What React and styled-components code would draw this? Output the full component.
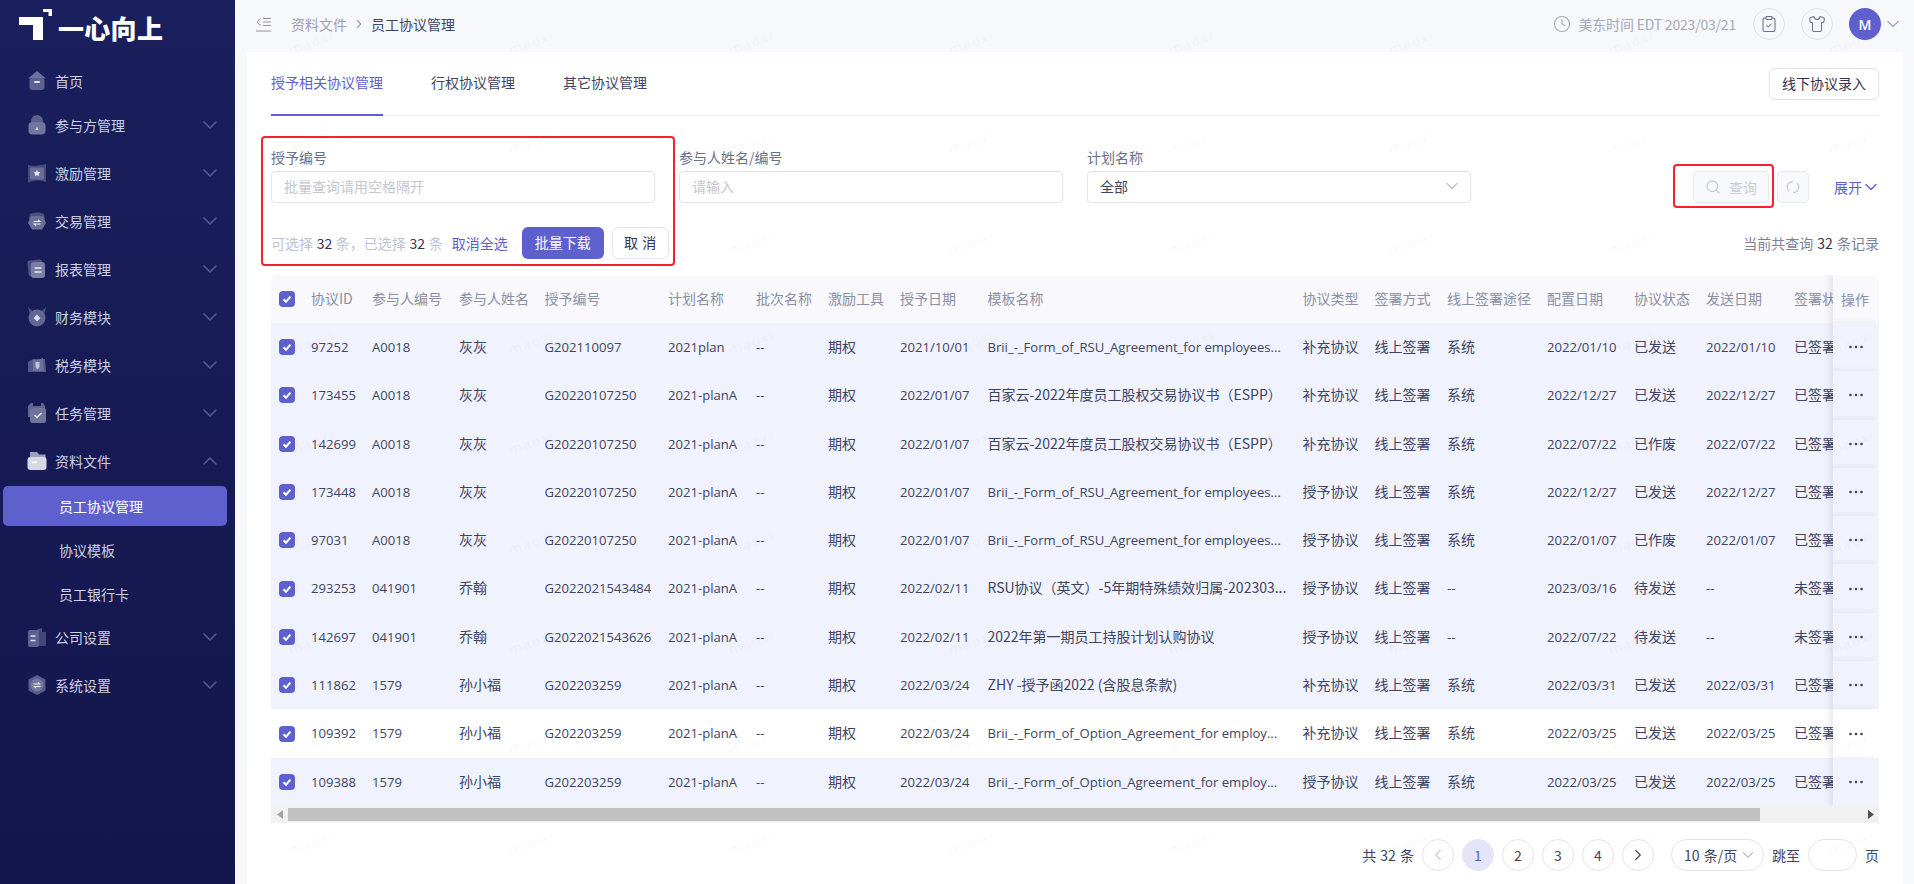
import React from 'react';
import styled, { createGlobalStyle } from 'styled-components';
import {
  ChevronDown,
  ChevronLeft,
  ChevronRight,
  ChevronUp,
  ClipboardCheck,
  Clock,
  Search,
  Shirt
} from 'lucide-react';

const PRIMARY = '#5e60ce';
const COLUMNS =
  '40px 61px 87px 85.5px 123.5px 88px 72px 72px 87.5px 315px 72px 72.5px 100px 87px 72px 88px 39px 46px';

const GlobalStyle = createGlobalStyle`
  * { box-sizing: border-box; }
  html, body { margin: 0; height: 100%; }
  body {
    background: #f7f8fc;
    font-family: "Noto Sans CJK SC", "Liberation Sans", sans-serif;
    font-size: 14px;
    color: #3e4463;
  }
`;

const Page = styled.div`
  position: relative;
  display: flex;
  height: 884px;
  overflow: hidden;
`;

const Sidebar = styled.aside`
  flex: 0 0 235px;
  background: linear-gradient(180deg, #1a205d 0%, #14154c 100%);
`;

const Brand = styled.div`
  display: flex;
  align-items: center;
  gap: 6px;
  height: 48px;
  padding-left: 19px;
  color: #fff;
  font-size: 26px;
  line-height: 30px;
  font-weight: 900;
  letter-spacing: 0.3px;

  span {
    margin-top: 7px;
  }
`;

const MenuList = styled.nav`
  display: flex;
  flex-direction: column;
  padding-top: 14px;
`;

const MenuItem = styled.div`
  display: flex;
  align-items: center;
  gap: 8px;
  height: ${p => (p.$first ? '40px' : '48px')};
  padding: 0 13px 2px 27px;
  color: #ccd0e4;
  line-height: 20px;

  .chevron {
    margin-left: auto;
    color: #585c8e;
  }
`;

const SubList = styled.div`
  display: flex;
  flex-direction: column;
  gap: 4px;
`;

const SubItem = styled.div`
  height: 40px;
  margin: ${p => (p.$active ? '0 8px 0 3px' : '0')};
  padding-left: ${p => (p.$active ? '56px' : '59px')};
  background: ${p => (p.$active ? PRIMARY : 'transparent')};
  border-radius: 5px;
  color: ${p => (p.$active ? '#fff' : '#ccd0e4')};
  line-height: 40px;
`;

const Main = styled.div`
  flex: 1;
  min-width: 0;
  display: flex;
  flex-direction: column;
`;

const Topbar = styled.header`
  display: flex;
  align-items: center;
  height: 52px;
  padding: 0 15px 4px 21px;
`;

const Crumbs = styled.div`
  display: flex;
  align-items: center;
  margin-left: 20px;
  color: #9ba0b4;

  b {
    font-weight: 400;
    color: #3e4463;
  }
  svg {
    margin: 0 5px;
  }
`;

const TopRight = styled.div`
  display: flex;
  align-items: center;
  margin-left: auto;
  color: #a4a9bb;

  > svg {
    margin-right: -4px;
  }
`;

const ClockText = styled.span`
  display: flex;
  align-items: center;
  gap: 8px;
  margin-right: 17px;
  letter-spacing: -0.2px;
`;

const RoundIcon = styled.span`
  display: flex;
  align-items: center;
  justify-content: center;
  width: 32px;
  height: 32px;
  margin-right: 16px;
  border: 1px solid #e1e3ec;
  border-radius: 50%;
  color: #6c7186;
`;

const Avatar = styled.span`
  display: flex;
  align-items: center;
  justify-content: center;
  width: 32px;
  height: 32px;
  margin-right: 2px;
  border-radius: 50%;
  background: ${PRIMARY};
  color: #fff;
  font-family: "Open Sans", sans-serif;
  font-weight: 600;
`;

const Card = styled.main`
  flex: 1;
  margin: 0 11px 0 12px;
  padding: 0 24px;
  background: #fff;
`;

const TabBar = styled.div`
  display: flex;
  align-items: center;
  height: 64px;
  border-bottom: 1px solid #eceef5;
`;

const Tab = styled.div`
  height: 64px;
  margin-right: 48px;
  border-bottom: 2px solid ${p => (p.$active ? PRIMARY : 'transparent')};
  color: ${p => (p.$active ? PRIMARY : '#3e4463')};
  line-height: 60px;
`;

const OutlineButton = styled.button`
  height: 32px;
  padding: 0 12px 2px;
  background: #fff;
  border: 1px solid #e3e5ee;
  border-radius: 6px;
  color: #2f344f;
  font: inherit;
  line-height: 20px;
`;

const EntryButton = styled(OutlineButton)`
  margin-left: auto;
`;

const FilterArea = styled.section`
  position: relative;
`;

const FilterRow = styled.div`
  display: flex;
  align-items: flex-end;
  gap: 24px;
  padding-top: 31px;
`;

const Field = styled.label`
  display: flex;
  flex-direction: column;
  gap: 4px;
  width: 384px;
  color: #6b7088;
  line-height: 20px;
`;

const InputBox = styled.div`
  display: flex;
  align-items: center;
  justify-content: space-between;
  height: 32px;
  padding: 0 12px 2px;
  border: 1px solid #e3e5ee;
  border-radius: 4px;
  color: ${p => (p.$filled ? '#3e4463' : '#c4c7d0')};

  svg {
    margin-right: -4px;
    color: #b9bdcb;
  }
`;

const QueryTools = styled.div`
  display: flex;
  align-items: center;
  gap: 8px;
  margin-left: auto;
`;

const GhostButton = styled.span`
  display: flex;
  align-items: center;
  justify-content: center;
  gap: 8px;
  width: ${p => p.$width}px;
  height: 32px;
  background: #f8f9fc;
  border: 1px solid #e6e8f0;
  border-radius: 5px;
  color: #c8ccd9;
`;

const Expand = styled.span`
  display: flex;
  align-items: center;
  margin-left: 17px;
  color: ${PRIMARY};

  svg {
    margin: 0 -2px 0 -1px;
  }
`;

const ActionRow = styled.div`
  display: flex;
  align-items: center;
  justify-content: space-between;
  height: 32px;
  margin-top: 24px;
`;

const Batch = styled.div`
  display: flex;
  align-items: center;
  color: #bcc3d8;
  word-spacing: 0.5px;

  b {
    font-weight: 400;
    color: #2f344f;
  }
`;

const LinkText = styled.span`
  margin: 0 14px 0 9px;
  color: ${PRIMARY};
`;

const PrimaryButton = styled.button`
  width: 82px;
  height: 32px;
  margin-right: 8px;
  padding: 0 0 2px;
  background: ${PRIMARY};
  border: 0;
  border-radius: 6px;
  color: #fff;
  font: inherit;
`;

const CancelButton = styled(OutlineButton)`
  width: 57px;
  padding: 0 0 2px;
  word-spacing: 1px;
`;

const Summary = styled.div`
  color: #7d8298;
  word-spacing: 1px;

  b {
    font-weight: 400;
    color: #2f344f;
  }
`;

const Mark = styled.div`
  position: absolute;
  border: 2px solid #f5222d;
  border-radius: 4px;
  pointer-events: none;
`;

const BatchMark = styled(Mark)`
  left: -10px;
  top: 20px;
  width: 414px;
  height: 130px;
`;

const QueryMark = styled(Mark)`
  left: 1402px;
  top: 48px;
  width: 101px;
  height: 44px;
`;

const Table = styled.div`
  margin-top: 16px;
  overflow: hidden;
  border-radius: 6px 6px 0 0;
`;

const Row = styled.div`
  display: grid;
  grid-template-columns: ${COLUMNS};
  height: ${p => (p.$head ? '48px' : '48.3px')};
  background: ${p => (p.$head ? '#f8f8fd' : p.$plain ? '#fff' : '#f0f2fd')};
  color: ${p => (p.$head ? '#8b90a4' : '#3e4463')};
`;

const Cell = styled.div`
  overflow: hidden;
  white-space: nowrap;
  line-height: ${p => (p.$ascii ? '48px' : '46px')};
  font-family: ${p => (p.$ascii ? '"Open Sans", sans-serif' : 'inherit')};
  font-size: ${p => (p.$ascii ? '13.1px' : '14px')};
`;

const BoxCell = styled(Cell)`
  display: flex;
  align-items: center;
  padding-left: 8px;
`;

const FixedCell = styled(Cell)`
  position: relative;
  display: flex;
  align-items: center;
  padding-left: 8px;
  background: inherit;
  box-shadow: -4px 0 6px rgba(40, 40, 90, 0.09);
`;

const DotsCell = styled(FixedCell)`
  padding-left: 16px;
`;

const CheckBox = styled.span`
  display: flex;
  align-items: center;
  justify-content: center;
  width: 16px;
  height: 16px;
  background: ${PRIMARY};
  border-radius: 4px;
`;

const ScrollTrack = styled.div`
  display: flex;
  align-items: center;
  height: 17px;
  background: #f1f1f1;
`;

const ScrollArrow = styled.span`
  display: flex;
  align-items: center;
  justify-content: center;
  flex: 0 0 17px;
  height: 17px;
  color: ${p => (p.$off ? '#a3a3a3' : '#505050')};
`;

const ScrollThumb = styled.span`
  flex: 0 0 1472px;
  height: 13px;
  margin-right: auto;
  background: #c1c1c1;
`;

const Pager = styled.div`
  display: flex;
  align-items: center;
  justify-content: flex-end;
  gap: 8px;
  margin-top: 16px;
  color: #3e4463;
  word-spacing: 1px;
`;

const PageButton = styled.span`
  display: flex;
  align-items: center;
  justify-content: center;
  width: 32px;
  height: 32px;
  background: ${p => (p.$active ? '#e5e5f9' : '#fff')};
  border: 1px solid ${p => (p.$active ? '#e5e5f9' : '#e3e5ee')};
  border-radius: 50%;
  color: ${p => (p.$active ? PRIMARY : p.$off ? '#c5c8d6' : '#3e4463')};
`;

const SizeSelect = styled.span`
  display: flex;
  align-items: center;
  gap: 2px;
  width: 93px;
  height: 32px;
  margin-left: 9px;
  padding-left: 12px;
  border: 1px solid #e3e5ee;
  border-radius: 16px;

  svg {
    color: #b9bdcb;
  }
`;

const JumpInput = styled.span`
  width: 49px;
  height: 32px;
  border: 1px solid #e3e5ee;
  border-radius: 16px;
`;

const Watermarks = styled.div`
  position: absolute;
  left: -7px;
  top: -13px;
  display: grid;
  grid-template-columns: repeat(9, 220px);
  grid-auto-rows: 100px;
  pointer-events: none;
`;

const Watermark = styled.span`
  align-self: center;
  justify-self: center;
  transform: rotate(-20deg);
  color: rgba(80, 80, 120, 0.045);
  font-family: "Open Sans", sans-serif;
  letter-spacing: 1.4px;
`;

const DuoSvg = styled.svg`
  flex: none;
  filter: blur(0.4px);
`;

const Duo = ({ children }) => (
  <DuoSvg width="20" height="20" viewBox="0 0 20 20" fill="none">
    {children}
  </DuoSvg>
);

const HomeIcon = () => (
  <Duo>
    <path d="M10 0 19 7.5H1z" fill="#8a8db0" opacity=".75" />
    <rect x="2.5" y="7" width="15" height="12" rx="3" fill="#5d6090" />
    <rect x="7" y="10" width="6" height="2" rx="1" fill="#e4e5f0" />
  </Duo>
);
const PartyIcon = () => (
  <Duo>
    <circle cx="10" cy="6" r="6" fill="#5d6090" />
    <rect x="1.5" y="7" width="17" height="12.5" rx="4" fill="#73759e" />
    <path d="M10 11.5 11.5 15H8.5z" fill="#e4e5f0" />
  </Duo>
);
const RewardIcon = () => (
  <Duo>
    <path d="M1 2c6 1 11 1 18-1v18c-6-2-12-2-18 1z" fill="#474b80" />
    <rect x="3" y="4.5" width="14" height="12" rx="1.5" fill="#6c6e98" />
    <path d="m10 6.8 1 2.3 2.4.2-1.8 1.6.6 2.4L10 12l-2.200 1.300.6-2.400-1.800-1.600L9 9.100z" fill="#eceef5" />
  </Duo>
);
const TradeIcon = () => (
  <Duo>
    <path d="M3 3c4-2 10-2 14 0l1 5-8 3-8-3z" fill="#4b4f84" />
    <path d="M4 5h12l3 7-4 6.500H5L1 12z" fill="#6c6e98" />
    <path d="M6.500 10.500H13l-2-1.600M13.500 13H7l2 1.600" stroke="#eceef5" strokeWidth="1.1" />
  </Duo>
);
const ReportIcon = () => (
  <Duo>
    <rect x="1" y="1" width="15" height="16" rx="2.5" transform="rotate(-6 8 9)" fill="#4f5286" />
    <rect x="4" y="3" width="14" height="16" rx="3" fill="#7b7da3" />
    <path d="M7.500 9h7M7.500 13h7" stroke="#e9eaf3" strokeWidth="1.4" />
  </Duo>
);
const FinanceIcon = () => (
  <Duo>
    <path d="M1 0 8 6h4l7-6-2 9H3z" fill="#4b4f84" />
    <circle cx="10" cy="11" r="8.500" fill="#636592" />
    <path d="m10 7.500 3.500 3.500L10 14.500 6.500 11z" fill="#dcdde9" />
  </Duo>
);
const TaxIcon = () => (
  <Duo>
    <path d="M1 7 6 4h12l1 13H1z" fill="#54578a" />
    <path d="M6 4c3 2 6 1 10-1l1 13H6z" fill="#6e7099" />
    <path d="M8.500 7h4v5l-2 2.500-2-2.500z" fill="#bfc0d6" />
  </Duo>
);
const TaskIcon = () => (
  <Duo>
    <path d="M4 0h2v3h8V0h2l2 3v11H1V3z" fill="#63658f" />
    <rect x="3" y="5" width="16" height="15" rx="2.5" fill="#72749c" />
    <path d="m7.500 12 2.500 2.500 4.500-4.500" stroke="#e9eaf3" strokeWidth="1.5" />
  </Duo>
);
const FolderIcon = () => (
  <Duo>
    <path d="M3 1h7l2 2.500h6.500V12H3z" fill="#9ea0bf" />
    <rect x="0.5" y="6" width="19" height="13" rx="3" fill="#d7d8e6" />
    <rect x="4" y="10.5" width="6" height="1.6" fill="#fff" />
  </Duo>
);
const CompanyIcon = () => (
  <Duo>
    <path d="M10 2.500 15 1v18h-5z" fill="#4b4f84" />
    <rect x="10" y="5" width="9" height="14" fill="#42467a" />
    <rect x="1" y="3" width="11" height="17" rx="2" fill="#5d6090" />
    <path d="M3.500 9h5M3.500 13.500h5" stroke="#dfe0ec" strokeWidth="1.3" />
  </Duo>
);
const SystemIcon = () => (
  <Duo>
    <path d="M10 0 18.500 4.500v11L10 20l-8.500-4.500v-11z" fill="#585b8c" />
    <circle cx="10" cy="10" r="6.500" fill="#77799f" />
    <path d="M6.500 9h6l-1.500-1.500M13.500 11.500h-6L9 13" stroke="#eceef5" strokeWidth="1.2" />
  </Duo>
);

const Logo = () => (
  <svg width="33" height="32" viewBox="0 0 33 32" fill="#fff">
    <path d="M0 9h24v23H14V17H0z" />
    <path d="M24 1h9v7h-3.500V4H24z" />
  </svg>
);

const CollapseIcon = () => (
  <svg width="15" height="15" viewBox="0 0 15 15" fill="none" stroke="#8f94a8" strokeWidth="1">
    <path d="M4.500 1.500 1 5l3.500 3.500M7 1.500h8M7 5h8M7 8.500h8M0 14h15" />
  </svg>
);

const ResetIcon = () => (
  <svg width="14" height="14" viewBox="0 0 14 14" fill="none" stroke="#c8ccd9" strokeWidth="1.3">
    <path d="M7 1.500A5.500 5.500 0 0 0 3 11M7 12.500A5.500 5.500 0 0 0 11 3" />
  </svg>
);

const Tick = () => (
  <svg width="10" height="10" viewBox="0 0 10 10" fill="none" stroke="#fff" strokeWidth="2">
    <path d="m1.500 5.200 2.500 2.500 4.500-5" />
  </svg>
);

const Dots = () => (
  <svg width="14" height="4" viewBox="0 0 14 4" fill="#3e4463">
    <circle cx="1.500" cy="2" r="1.300" />
    <circle cx="7" cy="2" r="1.300" />
    <circle cx="12.500" cy="2" r="1.300" />
  </svg>
);

const Triangle = ({ flip }) => (
  <svg width="6" height="9" viewBox="0 0 6 9" fill="currentColor">
    <path d={flip ? 'M6 0v9L0 4.500z' : 'M0 0v9l6-4.500z'} />
  </svg>
);

const menus = [
  { label: '参与方管理', Icon: PartyIcon },
  { label: '激励管理', Icon: RewardIcon },
  { label: '交易管理', Icon: TradeIcon },
  { label: '报表管理', Icon: ReportIcon },
  { label: '财务模块', Icon: FinanceIcon },
  { label: '税务模块', Icon: TaxIcon },
  { label: '任务管理', Icon: TaskIcon }
];

const heads = [
  '协议ID', '参与人编号', '参与人姓名', '授予编号', '计划名称', '批次名称', '激励工具',
  '授予日期', '模板名称', '协议类型', '签署方式', '线上签署途径', '配置日期', '协议状态',
  '发送日期', '签署状态'
];

const RSU = 'Brii_-_Form_of_RSU_Agreement_for employees...';
const OPTION = 'Brii_-_Form_of_Option_Agreement_for employ...';
const ESPP = '百家云-2022年度员工股权交易协议书（ESPP）';

const rows = [
  ['97252', 'A0018', '灰灰', 'G202110097', '2021plan', '2021/10/01', RSU, '补充协议', '系统', '2022/01/10', '已发送', '2022/01/10', '已签署'],
  ['173455', 'A0018', '灰灰', 'G20220107250', '2021-planA', '2022/01/07', ESPP, '补充协议', '系统', '2022/12/27', '已发送', '2022/12/27', '已签署'],
  ['142699', 'A0018', '灰灰', 'G20220107250', '2021-planA', '2022/01/07', ESPP, '补充协议', '系统', '2022/07/22', '已作废', '2022/07/22', '已签署'],
  ['173448', 'A0018', '灰灰', 'G20220107250', '2021-planA', '2022/01/07', RSU, '授予协议', '系统', '2022/12/27', '已发送', '2022/12/27', '已签署'],
  ['97031', 'A0018', '灰灰', 'G20220107250', '2021-planA', '2022/01/07', RSU, '授予协议', '系统', '2022/01/07', '已作废', '2022/01/07', '已签署'],
  ['293253', '041901', '乔翰', 'G2022021543484', '2021-planA', '2022/02/11', 'RSU协议（英文）-5年期特殊绩效归属-202303...', '授予协议', '--', '2023/03/16', '待发送', '--', '未签署'],
  ['142697', '041901', '乔翰', 'G2022021543626', '2021-planA', '2022/02/11', '2022年第一期员工持股计划认购协议', '授予协议', '--', '2022/07/22', '待发送', '--', '未签署'],
  ['111862', '1579', '孙小福', 'G202203259', '2021-planA', '2022/03/24', 'ZHY -授予函2022 (含股息条款)', '补充协议', '系统', '2022/03/31', '已发送', '2022/03/31', '已签署'],
  ['109392', '1579', '孙小福', 'G202203259', '2021-planA', '2022/03/24', OPTION, '补充协议', '系统', '2022/03/25', '已发送', '2022/03/25', '已签署', true],
  ['109388', '1579', '孙小福', 'G202203259', '2021-planA', '2022/03/24', OPTION, '授予协议', '系统', '2022/03/25', '已发送', '2022/03/25', '已签署']
];

const isAscii = text => /^[\x00-\x7f]*$/.test(text);

const Text = ({ children }) => <Cell $ascii={isAscii(children)}>{children}</Cell>;

const DataRow = ({ data }) => {
  const [id, no, name, grant, plan, date, template, type, channel, config, status, sent, sign, plain] = data;
  const cells = [id, no, name, grant, plan, '--', '期权', date, template, type, '线上签署', channel, config, status, sent, sign];
  return (
    <Row $plain={plain}>
      <BoxCell><CheckBox><Tick /></CheckBox></BoxCell>
      {cells.map((text, i) => <Text key={i}>{text}</Text>)}
      <DotsCell><Dots /></DotsCell>
    </Row>
  );
};

const App = () => (
  <>
    <GlobalStyle />
    <Page>
      <Sidebar>
        <Brand>
          <Logo />
          <span>一心向上</span>
        </Brand>
        <MenuList>
          <MenuItem $first>
            <HomeIcon />
            首页
          </MenuItem>
          {menus.map(({ label, Icon }) => (
            <MenuItem key={label}>
              <Icon />
              {label}
              <ChevronDown className="chevron" size={24} strokeWidth={1.5} />
            </MenuItem>
          ))}
          <MenuItem>
            <FolderIcon />
            资料文件
            <ChevronUp className="chevron" size={24} strokeWidth={1.5} />
          </MenuItem>
          <SubList>
            <SubItem $active>员工协议管理</SubItem>
            <SubItem>协议模板</SubItem>
            <SubItem>员工银行卡</SubItem>
          </SubList>
          <MenuItem>
            <CompanyIcon />
            公司设置
            <ChevronDown className="chevron" size={24} strokeWidth={1.5} />
          </MenuItem>
          <MenuItem>
            <SystemIcon />
            系统设置
            <ChevronDown className="chevron" size={24} strokeWidth={1.5} />
          </MenuItem>
        </MenuList>
      </Sidebar>

      <Main>
        <Topbar>
          <CollapseIcon />
          <Crumbs>
            资料文件
            <ChevronRight size={14} />
            <b>员工协议管理</b>
          </Crumbs>
          <TopRight>
            <ClockText>
              <Clock size={18} strokeWidth={1.5} />
              美东时间 EDT 2023/03/21
            </ClockText>
            <RoundIcon><ClipboardCheck size={18} strokeWidth={1.4} /></RoundIcon>
            <RoundIcon><Shirt size={18} strokeWidth={1.4} /></RoundIcon>
            <Avatar>M</Avatar>
            <ChevronDown size={20} strokeWidth={1.5} />
          </TopRight>
        </Topbar>

        <Card>
          <TabBar>
            <Tab $active>授予相关协议管理</Tab>
            <Tab>行权协议管理</Tab>
            <Tab>其它协议管理</Tab>
            <EntryButton>线下协议录入</EntryButton>
          </TabBar>

          <FilterArea>
            <FilterRow>
              <Field>
                授予编号
                <InputBox>批量查询请用空格隔开</InputBox>
              </Field>
              <Field>
                参与人姓名/编号
                <InputBox>请输入</InputBox>
              </Field>
              <Field>
                计划名称
                <InputBox $filled>
                  全部
                  <ChevronDown size={20} strokeWidth={1.3} />
                </InputBox>
              </Field>
              <QueryTools>
                <GhostButton $width={76}>
                  <Search size={16} />
                  查询
                </GhostButton>
                <GhostButton $width={32}><ResetIcon /></GhostButton>
                <Expand>
                  展开
                  <ChevronDown size={20} strokeWidth={1.6} />
                </Expand>
              </QueryTools>
            </FilterRow>
            <ActionRow>
              <Batch>
                可选择&nbsp;<b>32</b>&nbsp;条，已选择&nbsp;<b>32</b>&nbsp;条
                <LinkText>取消全选</LinkText>
                <PrimaryButton>批量下载</PrimaryButton>
                <CancelButton>取 消</CancelButton>
              </Batch>
              <Summary>当前共查询 <b>32</b> 条记录</Summary>
            </ActionRow>
            <BatchMark />
            <QueryMark />
          </FilterArea>

          <Table>
            <Row $head>
              <BoxCell><CheckBox><Tick /></CheckBox></BoxCell>
              {heads.map(text => <Cell key={text}>{text}</Cell>)}
              <FixedCell>操作</FixedCell>
            </Row>
            {rows.map(row => <DataRow key={row[0]} data={row} />)}
          </Table>
          <ScrollTrack>
            <ScrollArrow $off><Triangle flip /></ScrollArrow>
            <ScrollThumb />
            <ScrollArrow><Triangle /></ScrollArrow>
          </ScrollTrack>

          <Pager>
            <span>共 32 条</span>
            <PageButton $off><ChevronLeft size={18} strokeWidth={1.5} /></PageButton>
            <PageButton $active>1</PageButton>
            <PageButton>2</PageButton>
            <PageButton>3</PageButton>
            <PageButton>4</PageButton>
            <PageButton><ChevronRight size={18} strokeWidth={1.5} /></PageButton>
            <SizeSelect>
              10 条/页
              <ChevronDown size={18} strokeWidth={1.5} />
            </SizeSelect>
            <span>跳至</span>
            <JumpInput />
            <span>页</span>
          </Pager>
        </Card>
      </Main>

      <Watermarks>
        {Array.from({ length: 81 }, (_, i) => <Watermark key={i}>maoxi. . .</Watermark>)}
      </Watermarks>
    </Page>
  </>
);

export default App;
